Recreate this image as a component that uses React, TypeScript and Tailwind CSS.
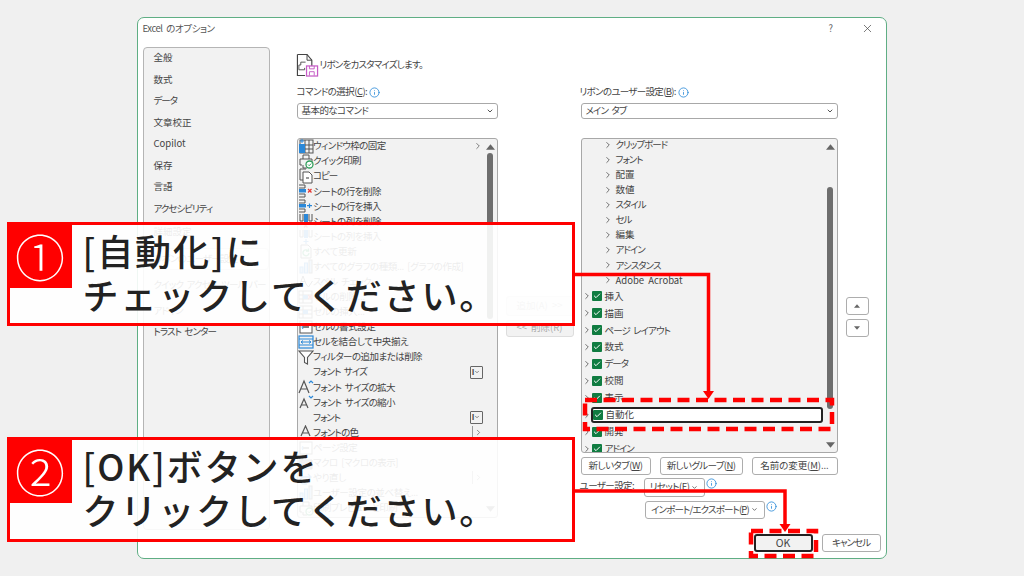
import { ChevronDown, ChevronRight, Check, Info, X } from "lucide-react"
import type { ReactNode } from "react"

const navItems = [
  { label: "全般", cls: "h-[21.5px]" },
  { label: "数式", cls: "h-[21.5px]" },
  { label: "データ", cls: "h-[21.5px]" },
  { label: "文章校正", cls: "h-[21.5px]" },
  { label: "Copilot", cls: "h-[21.5px]" },
  { label: "保存", cls: "h-[21.5px]" },
  { label: "言語", cls: "h-[21.5px]" },
  { label: "アクセシビリティ", cls: "h-[21.5px]" },
  { label: "詳細設定", cls: "h-[24px] mt-[0.5px]" },
  { label: "リボンのユーザー設定", cls: "h-[22px] mt-[4px] bg-white border border-[#d4d4d4] rounded-[4px]" },
  { label: "クイック アクセス ツール バー", cls: "h-[24px] mt-[3px]" },
  { label: "アドイン", cls: "h-[24px] mt-[2px]" },
  { label: "トラスト センター", cls: "h-[21.5px] -mt-[1.5px]" },
]

const commandRows: { label: string; icon?: string; more?: string }[] = [
  { label: "ウィンドウ枠の固定", icon: "freeze", more: "arrow" },
  { label: "クイック印刷", icon: "print" },
  { label: "コピー", icon: "copy" },
  { label: "シートの行を削除", icon: "rowDel" },
  { label: "シートの行を挿入", icon: "rowAdd" },
  { label: "シートの列を削除", icon: "colDel" },
  { label: "シートの列を挿入", icon: "colAdd" },
  { label: "すべて更新", icon: "refresh" },
  { label: "すべてのグラフの種類... [グラフの作成]", icon: "chart" },
  { label: "スペル チェック...", icon: "spell" },
  { label: "セルの削除...", icon: "cellDel" },
  { label: "セルの挿入...", icon: "cellAdd" },
  { label: "セルの書式設定", icon: "format" },
  { label: "セルを結合して中央揃え", icon: "merge" },
  { label: "フィルターの追加または削除", icon: "filter" },
  { label: "フォント サイズ", more: "combo" },
  { label: "フォント サイズの拡大", icon: "fontUp" },
  { label: "フォント サイズの縮小", icon: "fontDown" },
  { label: "フォント", more: "combo" },
  { label: "フォントの色", icon: "fontColor", more: "bar" },
  { label: "ページ設定", icon: "format" },
  { label: "マクロ [マクロの表示]", icon: "macro" },
  { label: "やり直し", icon: "redo", more: "bar" },
  { label: "ユーザー設定の並べ替え...", icon: "chart" },
  { label: "印刷プレビューと印刷", icon: "print" },
]

const groupRows = ["クリップボード", "フォント", "配置", "数値", "スタイル", "セル", "編集", "アドイン", "アシスタンス", "Adobe Acrobat"]
const tabRows = ["挿入", "描画", "ページ レイアウト", "数式", "データ", "校閲", "表示", "自動化", "開発", "アドイン"]

// the dialog's UI font sets kana tighter than Noto, so squeeze by how much kana a label has
function J({ t, children }: { t: string; children?: ReactNode }) {
  const katakana = (t.match(/[\u30a0-\u30ff]/g) ?? []).length
  const hiragana = (t.match(/[\u3040-\u309f]/g) ?? []).length
  const spacing = -(katakana + hiragana * 0.5) / t.length
  return (
    <span style={{ letterSpacing: `${spacing.toFixed(2)}px` }}>
      {t}
      {children}
    </span>
  )
}

function RowIcon({ kind }: { kind?: string }) {
  const gray = "#555"
  const blue = "#2b88d8"
  let body: ReactNode = null
  if (kind === "freeze") {
    body = (
      <>
        <rect x="2" y="2" width="13" height="13" fill="none" stroke={gray} />
        <path d="M2 7h13M2 11h13M7 2v13M11 2v13" stroke={gray} />
        <rect x="1" y="6" width="6" height="9" fill={blue} />
        <path d="M4 1l0 4M2 3h4" stroke={blue} />
      </>
    )
  } else if (kind === "print") {
    body = (
      <>
        <path d="M5 6V2h6v4M4 12H2V6h12v3M5 12v3h4" fill="none" stroke={gray} />
        <circle cx="11.5" cy="11.5" r="3.5" fill="#fff" stroke="#2f9e5b" strokeWidth="1.3" />
        <path d="M10 11.5l1.2 1.2 2-2.2" fill="none" stroke="#2f9e5b" />
      </>
    )
  } else if (kind === "copy") {
    body = (
      <>
        <path d="M8 1H2v11h3" fill="none" stroke={gray} />
        <path d="M5 4h6l3 3v8H5z" fill="#fff" stroke={gray} />
        <rect x="8" y="9" width="3" height="2" fill="#999" />
      </>
    )
  } else if (kind === "rowDel" || kind === "rowAdd") {
    body = (
      <>
        <path d="M1 2h6v3H1M1 11h6v3H1" fill="none" stroke={gray} />
        <rect x="1" y="6" width="7" height="3.5" fill={blue} />
        {kind === "rowDel" ? (
          <path d="M10 6l3.5 3.5M13.5 6L10 9.5" stroke="#e53935" strokeWidth="1.3" />
        ) : (
          <path d="M9 7.7h5M11.5 5.5v4.5" stroke={blue} strokeWidth="1.2" />
        )}
      </>
    )
  } else if (kind === "colDel" || kind === "colAdd") {
    body = (
      <>
        <path d="M2 1v7h3V1M11 1v7h3V1" fill="none" stroke={gray} />
        <rect x="6" y="1" width="4" height="8" fill={blue} />
        {kind === "colDel" ? (
          <path d="M6 11l3.5 3.5M9.5 11L6 14.5" stroke="#e53935" strokeWidth="1.3" />
        ) : (
          <path d="M8 10v5M5.5 12.5h5" stroke={blue} strokeWidth="1.2" />
        )}
      </>
    )
  } else if (kind === "refresh") {
    body = (
      <>
        <path d="M3 1h7l3 3v10H3z" fill="none" stroke={gray} />
        <path d="M11 9a3 3 0 1 1-1-2.4M10.5 4.5v2.5H8" fill="none" stroke="#2f9e5b" strokeWidth="1.3" />
      </>
    )
  } else if (kind === "chart") {
    body = (
      <>
        <rect x="2" y="8" width="3" height="6" fill="#9cc7ea" stroke={blue} />
        <rect x="6.5" y="4" width="3" height="10" fill="#9cc7ea" stroke={blue} />
        <rect x="11" y="1" width="3" height="13" fill="#9cc7ea" stroke={gray} />
      </>
    )
  } else if (kind === "spell") {
    body = <path d="M2 10l3-8 3 8M3 7.5h4M8 10l2.5 3 4-6" fill="none" stroke={gray} />
  } else if (kind === "cellDel" || kind === "cellAdd") {
    body = (
      <>
        <rect x="1" y="2" width="13" height="12" fill="none" stroke={gray} />
        <path d="M1 6h13M1 10h13M5 2v12" stroke={gray} />
        <rect x="5" y="6" width="5" height="4" fill={blue} />
        {kind === "cellDel" && <path d="M10 6l4 4M14 6l-4 4" stroke="#e53935" strokeWidth="1.2" />}
      </>
    )
  } else if (kind === "format") {
    body = (
      <>
        <rect x="2" y="2" width="12" height="12" fill="#fff" stroke={gray} />
        <path d="M5 8h6" stroke={gray} strokeWidth="1.5" />
        <path d="M5 6l-1 2 1 2" fill="none" stroke={blue} />
      </>
    )
  } else if (kind === "merge") {
    body = (
      <>
        <rect x="1" y="2" width="14" height="12" fill="none" stroke={blue} strokeWidth="1.2" />
        <path d="M1 5h14M1 11h14" stroke={blue} />
        <path d="M3 8h10M3 8l2-1.5M3 8l2 1.5M13 8l-2-1.5M13 8l-2 1.5" stroke={blue} />
      </>
    )
  } else if (kind === "filter") {
    body = <path d="M1 2h14L9.500 8.500V15l-3-1.500V8.500z" fill="#fff" stroke={gray} strokeWidth="1.1" />
  } else if (kind === "fontUp" || kind === "fontDown") {
    const big = kind === "fontUp"
    body = (
      <>
        <path d={big ? "M1 14L6 2l5 12M3 10h6" : "M2 14L6 5l4 9M3.500 11h5"} fill="none" stroke={gray} strokeWidth="1.2" />
        <path d={big ? "M11 4l2-2 2 2" : "M11 2l2 2 2-2"} fill="none" stroke={blue} strokeWidth="1.2" />
      </>
    )
  } else if (kind === "fontColor") {
    body = (
      <>
        <path d="M3 11L7.500 1l4.500 10M5 8h5" fill="none" stroke={gray} strokeWidth="1.2" />
        <rect x="2" y="13" width="11" height="2" fill="#d22" />
      </>
    )
  } else if (kind === "macro") {
    body = <path d="M3 5h11v9H3zM1 2l4 3-4 3z" fill="#333" fillOpacity=".6" stroke={gray} />
  } else if (kind === "redo") {
    body = <path d="M13 7H6a3 3 0 0 0 0 7h3M10 4l3 3-3 3" fill="none" stroke={blue} strokeWidth="1.3" />
  }
  return (
    <span className="w-[15px] h-[15px] shrink-0 block">
      <svg viewBox="0 0 16 16" className="w-[16px] h-[16px] -mt-[0.5px]">
        {body}
      </svg>
    </span>
  )
}

function Tip({ className }: { className?: string }) {
  return <Info size={11} className={`text-[#2b8ad8] shrink-0 ${className ?? ""}`} strokeWidth={1.8} />
}

function Btn({ className, children }: { className: string; children: ReactNode }) {
  return (
    <div className={`flex items-center justify-center rounded-[3px] border border-[#adadad] bg-white text-[#444] whitespace-nowrap ${className}`}>
      {children}
    </div>
  )
}

function Select({ value }: { value: string }) {
  return (
    <div className="mt-[3px] h-[16px] flex items-center rounded-[3px] border border-[#a8a8a8] bg-white pl-[4px] pr-[3px] text-[#444]">
      <span className="flex-1"><J t={value} /></span>
      <ChevronDown size={8} strokeWidth={2.5} className="text-[#333]" />
    </div>
  )
}

function Tri({ down, className }: { down?: boolean; className?: string }) {
  return (
    <svg viewBox="0 0 10 6" className={`w-[9px] h-[6px] ${className ?? ""}`}>
      <path d={down ? "M0 0h10L5 6z" : "M0 6h10L5 0z"} fill="#666" />
    </svg>
  )
}

function Callout({ num, top, lines }: { num: string; top: string; lines: string[] }) {
  return (
    <div className={`absolute left-[6.5px] ${top} w-[568px] h-[104.5px] flex border-[3px] border-[#ff0000] bg-white/90`}>
      <div className="w-[63px] h-[64px] -mt-px -ml-px pb-[2px] bg-[#ff0000] flex items-center justify-center shrink-0 text-white text-[50px] leading-none font-light">
        {num}
      </div>
      <div className="pl-[11px] pt-[3px] text-[36px] leading-[44px] font-medium text-[#222] whitespace-nowrap tracking-[1.9px]">
        {lines.map((l) => (
          <div key={l}>{l}</div>
        ))}
      </div>
    </div>
  )
}

export default function App() {
  return (
    <div className="relative w-[1024px] h-[576px] overflow-hidden bg-[#f0f0f0] pt-[17px] pl-[137px] font-['Noto_Sans_CJK_JP',sans-serif] text-[#444]">
      <div className="w-[750px] h-[542px] flex flex-col rounded-[7px] border-[1.5px] border-[#5fae84] bg-white [font-feature-settings:'palt'] [word-spacing:2px] text-[9.5px] leading-none">
        {/* title bar */}
        <div className="h-[28.5px] shrink-0 flex items-center pl-[4.5px] pr-[12px] pb-[7px]">
          <span className="flex-1 text-[#555]"><J t="Excel のオプション" /></span>
          <span className="text-[#666] mr-[28px]">?</span>
          <X size={13} strokeWidth={1.3} className="text-[#444]" />
        </div>

        <div className="flex flex-1 min-h-0">
          {/* categories */}
          <div className="ml-[4.5px] w-[127px] h-[483px] shrink-0 rounded-[4px] border border-[#b5b5b5] bg-[#f2f2f2] text-[#444]">
            <div className="-mt-[0.5px]">
              {navItems.map((n) => (
                <div key={n.label} className={`flex items-center pl-[10px] ${n.cls}`}><J t={n.label} /></div>
              ))}
            </div>
          </div>

          <div className="ml-[27px] flex-1 min-w-0">
            <div className="mt-[6px] h-[24px] flex items-center">
              <svg viewBox="0 0 24 24" className="w-[23px] h-[24px] -ml-px">
                <path d="M1.500 1h10l5 6v7M1.500 1v22h8" fill="none" stroke="#444" strokeWidth="1.2" />
                <path d="M11.500 1v6h5" fill="none" stroke="#444" />
                <path d="M10 9H5v3H3v5h6v-2" fill="none" stroke="#555" />
                <rect x="11" y="13" width="11.500" height="10.500" fill="#fff" stroke="#c65cc6" strokeWidth="1.3" />
                <path d="M14 13v3h5v-3M14 23v-4h5v4" fill="none" stroke="#c65cc6" />
              </svg>
              <span className="ml-[1px] text-[#444]"><J t="リボンをカスタマイズします。" /></span>
            </div>

            <div className="mt-[8px] flex">
              {/* commands column */}
              <div className="w-[201px] shrink-0">
                <div className="h-[15px] flex items-center gap-[2px]">
                  <J t="コマンドの選択("><u>C</u>):</J>
                  <Tip />
                </div>
                <Select value="基本的なコマンド" />
                <div className="relative mt-[19px] h-[380px] overflow-hidden rounded-[3px] border border-[#a8a8a8] bg-[#f2f2f2]">
                  {commandRows.map((r) => (
                    <div key={r.label} className="h-[15.08px] flex items-center pl-[0.5px] whitespace-nowrap">
                      {r.icon ? <RowIcon kind={r.icon} /> : <span className="w-[15px] shrink-0" />}
                      <J t={r.label} />
                      {r.more && (
                        <span className="ml-auto mr-[14px] flex items-center">
                          {r.more === "arrow" && <ChevronRight size={10} strokeWidth={1.6} />}
                          {r.more === "bar" && (
                            <span className="flex items-center border-l border-[#999] h-[13px] pl-[1px] -ml-[3px]">
                              <ChevronRight size={9} strokeWidth={1.6} />
                            </span>
                          )}
                          {r.more === "combo" && (
                            <span className="flex items-center justify-center w-[13px] h-[13px] border border-[#666] rounded-[1px]">
                              <span className="text-[8px] font-bold">I</span>
                              <ChevronDown size={6} strokeWidth={2.5} />
                            </span>
                          )}
                        </span>
                      )}
                    </div>
                  ))}
                  {/* scrollbar */}
                  <div className="absolute right-[2px] top-0 bottom-0 w-[9px] flex flex-col items-center">
                    <Tri className="mt-[5px]" />
                    <div className="mt-[3px] w-[6px] h-[166px] rounded-full bg-[#6e6e6e]" />
                    <Tri down className="mt-auto mb-[5px]" />
                  </div>
                </div>
              </div>

              {/* add / remove */}
              <div className="w-[83px] shrink-0 pl-[8px] pt-[211px]">
                <Btn className="w-[68px] h-[20px] !bg-[#f2f2f2] !border-[#ddd] !text-[#aaa]">追加(A) &gt;&gt;</Btn>
                <Btn className="mt-[4px] w-[68px] h-[17px] !bg-[#f2f2f2] !border-[#ddd] !text-[#aaa]">&lt;&lt; 削除(R)</Btn>
              </div>

              {/* ribbon column */}
              <div className="w-[257px] shrink-0">
                <div className="h-[15px] flex items-center gap-[2px] -ml-px">
                  <J t="リボンのユーザー設定("><u>B</u>):</J>
                  <Tip />
                </div>
                <Select value="メイン タブ" />
                <div className="relative mt-[19px] h-[315px] overflow-hidden rounded-[3px] border border-[#a8a8a8] bg-[#f2f2f2] whitespace-nowrap">
                  <div className="-mt-[1.5px]">
                    {groupRows.map((g) => (
                      <div key={g} className="h-[15.1px] flex items-center pl-[21.5px]">
                        <ChevronRight size={10} strokeWidth={1.8} className="text-[#444]" />
                        <span className="ml-[2.5px]"><J t={g} /></span>
                      </div>
                    ))}
                    {tabRows.map((t) => {
                      const active = t === "自動化"
                      return (
                        <div key={t} className="h-[16.95px] flex items-center pl-[0.5px]">
                          <ChevronRight size={10} strokeWidth={1.8} className="text-[#444] shrink-0" />
                          <div className={`flex items-center flex-1 h-[16px] mr-[14px] ${active ? "bg-white border-2 border-[#222] rounded-[3px] -ml-[1px]" : ""}`}>
                            <span className="flex items-center justify-center w-[10px] h-[10px] shrink-0 rounded-[1px] bg-[#107c41]">
                              <Check size={8} strokeWidth={3} className="text-white" />
                            </span>
                            <span className="ml-[2.5px]"><J t={t} /></span>
                          </div>
                        </div>
                      )
                    })}
                  </div>
                  <div className="absolute right-[2px] top-0 bottom-0 w-[9px] flex flex-col items-center">
                    <Tri className="mt-[5px]" />
                    <div className="mt-[37px] w-[6px] h-[222px] rounded-full bg-[#6e6e6e]" />
                    <Tri down className="mt-auto mb-[4px]" />
                  </div>
                </div>

                <div className="mt-[4px] flex justify-between">
                  <Btn className="w-[70px] h-[18px]"><J t="新しいタブ("><u>W</u>)</J></Btn>
                  <Btn className="w-[83px] h-[18px]"><J t="新しいグループ("><u>N</u>)</J></Btn>
                  <Btn className="w-[86px] h-[18px]"><J t="名前の変更("><u>M</u>)...</J></Btn>
                </div>
                <div className="mt-[3px] flex h-[19px]">
                  <span className="w-[64px] -ml-px pt-[3px]"><J t="ユーザー設定:" /></span>
                  <Btn className="w-[61px] h-[19px] gap-[2px]"><J t="リセット(E)" /><ChevronDown size={7} strokeWidth={2.5} /></Btn>
                  <Tip className="ml-[1px]" />
                </div>
                <div className="mt-[4px] flex h-[18px] pl-[64px]">
                  <Btn className="w-[120px] h-[18px] gap-[2px]"><J t="インポート/エクスポート("><u>P</u>)</J><ChevronDown size={7} strokeWidth={2.5} /></Btn>
                  <Tip className="ml-[1px]" />
                </div>
              </div>

              {/* move up / down */}
              <div className="ml-[8px] w-[23px] shrink-0 pt-[212px]">
                <Btn className="w-[23px] h-[18px]"><Tri className="!w-[6px] !h-[4px]" /></Btn>
                <Btn className="mt-[4px] w-[23px] h-[18px]"><Tri down className="!w-[6px] !h-[4px]" /></Btn>
              </div>
            </div>
          </div>
        </div>

        {/* footer */}
        <div className="h-[24px] shrink-0 flex justify-end gap-[9px] pr-[5.5px] items-start">
          <Btn className="w-[59px] h-[18px] !bg-[#f2f2f2] !border-2 !border-[#222] text-[#222] text-[10.5px]">OK</Btn>
          <Btn className="w-[59px] h-[18px]"><J t="キャンセル" /></Btn>
        </div>
      </div>

      <Callout num="①" top="top-[221.5px]" lines={["[自動化]に", "チェックしてください。"]} />
      <Callout num="②" top="top-[437px]" lines={["[OK]ボタンを", "クリックしてください。"]} />

      {/* connectors and dashed markers */}
      <svg viewBox="0 0 1024 576" className="absolute inset-0 w-[1024px] h-[576px] pointer-events-none">
        <path d="M574 274.500H708.500V392" fill="none" stroke="#f00" strokeWidth="3.500" />
        <path d="M703 391h11l-5.500 8z" fill="#f00" />
        <path d="M574 491H785V525" fill="none" stroke="#f00" strokeWidth="3.500" />
        <path d="M779.500 524h11l-5.500 8z" fill="#f00" />
        <rect x="585" y="400" width="247" height="29" fill="none" stroke="#f00" strokeWidth="4.500" strokeDasharray="12 6.500" />
        <rect x="751" y="531" width="65" height="25" fill="none" stroke="#f00" strokeWidth="4.500" strokeDasharray="12 6.500" />
      </svg>
    </div>
  )
}
